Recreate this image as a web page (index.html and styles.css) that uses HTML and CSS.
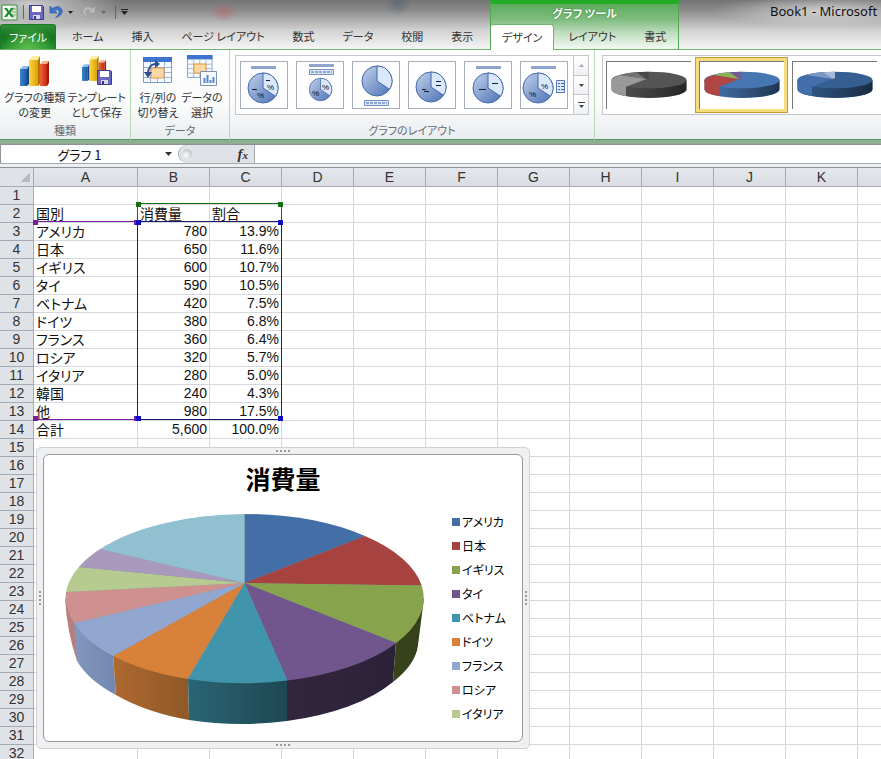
FILE: index.html
```html
<!DOCTYPE html>
<html lang="ja">
<head>
<meta charset="utf-8">
<title>Book1 - Microsoft</title>
<link rel="stylesheet" href="styles.css">
</head>
<body>
<svg class="defs" aria-hidden="true">
  <defs>
    <linearGradient id="disc" x1="0" y1="0" x2="1" y2="1"><stop offset="0" stop-color="#c3d2ec"/><stop offset="1" stop-color="#4a70b4"/></linearGradient>
    <linearGradient id="bar-blue"><stop offset="0" stop-color="#3f86cf"/><stop offset="1" stop-color="#1d569f"/></linearGradient>
    <linearGradient id="bar-gold"><stop offset="0" stop-color="#fbd545"/><stop offset="1" stop-color="#dfa100"/></linearGradient>
    <linearGradient id="bar-red"><stop offset="0" stop-color="#f0653c"/><stop offset="1" stop-color="#c5280e"/></linearGradient>
    <linearGradient id="shade"><stop offset="0" stop-color="#000" stop-opacity=".1"/><stop offset="1" stop-color="#000" stop-opacity=".55"/></linearGradient>
    <g id="pie">
      <circle r="15" fill="url(#disc)" stroke="#4468a8"/>
      <path d="M0 0V-15A15 15 0 0 1 12.500 8.300Z" fill="#dbe7fa" stroke="#4468a8"/>
    </g>
    <g id="bars">
      <path d="M0 13l3-3h6l-2 3z" fill="#8fbdec"/><path d="M0 13h7v17H0z" fill="url(#bar-blue)"/><path d="M7 13l2-3v18l-2 2z" fill="#174782"/>
      <path d="M20 8l3-3h6l-2 3z" fill="#f8a888"/><path d="M20 8h7v22h-7z" fill="url(#bar-red)"/><path d="M27 8l2-3v22l-2 3z" fill="#9c1c08"/>
      <path d="M9 4l3-4h8l-2 4z" fill="#fff0a0"/><path d="M9 4h9v26H9z" fill="url(#bar-gold)"/><path d="M18 4l2-4v28l-2 2z" fill="#b07a00"/>
    </g>
    <g id="grid">
      <path d="M.5.5h28v25H.5z" fill="#f6faff" stroke="#7b9ccc"/>
      <path d="M0 0h29v5H0z" fill="#3d74d0"/>
      <path d="M1 10.500h27M1 15.500h27M1 20.500h27M7.500 5v20M14.500 5v20M21.500 5v20" stroke="#9eb5d8"/>
    </g>
    <g id="floppy">
      <path d="M.5.5h13l1 1v13H.5z" fill="#6b67c0" stroke="#3f3a8c"/>
      <path d="M3 1h9v6H3z" fill="#fff"/><path d="M4 10h7v4H4z" fill="#d6d9ee"/><path d="M5 11h2v3H5z" fill="#37347c"/>
    </g>
  </defs>
</svg>

<header class="top">
  <div class="quick">
    <svg class="xl" viewBox="0 0 17 17" aria-hidden="true"><path d="M1 1h15v15H1z" fill="#f4faf2" stroke="#3c8a3e"/><path d="M10 2h5v13h-5z" fill="#d5e8d2"/><path d="M11 5h4M11 8h4M11 11h4" stroke="#7db57c"/><path d="M3 4h3l2 3 2-3h3L9.500 8.500 13 13h-3l-2-3-2 3H3l3.500-4.500z" fill="#1f8a35"/></svg>
    <span class="bar"></span>
    <button aria-label="上書き保存"><svg width="15" height="15"><use href="#floppy"/></svg></button>
    <button aria-label="元に戻す"><svg width="14" height="14" viewBox="0 0 14 14"><path d="M1 1v7h7L5.500 5.700C8.500 3.500 11 5 10 8c-.5 1.800-1.800 3-3.500 4.500C11 11.500 14 8.500 13 5 12 1.500 7.500.5 3.500 3.500z" fill="#3f74c8" stroke="#2454a0" stroke-width=".6"/></svg></button>
    <button aria-label="元に戻す一覧" class="drop"><svg width="5" height="3"><path d="M0 0h5L2.500 3z" fill="#222"/></svg></button>
    <button aria-label="やり直し"><svg width="14" height="14" viewBox="0 0 14 14"><path d="M13 1v7H6l2.500-2.300C5.500 3.500 3 5 4 8c.5 1.800 1.800 3 3.500 4.500C3 11.500 0 8.500 1 5 2 1.500 6.500.5 10.500 3.500z" fill="#b9b9b9" stroke="#9a9a9a" stroke-width=".6"/></svg></button>
    <button aria-label="やり直し一覧" class="drop"><svg width="5" height="3"><path d="M0 0h5L2.500 3z" fill="#666"/></svg></button>
    <span class="bar"></span>
    <button aria-label="ツールバーのカスタマイズ"><svg width="7" height="6"><path d="M0 0h7v1H0zM0 2h7L3.500 6z" fill="#222"/></svg></button>
  </div>
  <nav class="tabs">
    <a class="file" href="#file">ファイル</a>
    <a href="#home">ホーム</a>
    <a href="#insert">挿入</a>
    <a href="#page">ページ レイアウト</a>
    <a href="#formulas">数式</a>
    <a href="#data">データ</a>
    <a href="#review">校閲</a>
    <a href="#view">表示</a>
  </nav>
  <div class="context">
    <div class="context-title">グラフ ツール</div>
    <nav class="tabs">
      <a class="active" href="#design">デザイン</a>
      <a href="#layout">レイアウト</a>
      <a href="#format">書式</a>
    </nav>
  </div>
  <div class="caption">Book1 - Microsoft</div>
</header>

<section class="ribbon">
  <div class="group type-group">
    <div class="tools">
      <button class="tool"><svg width="32" height="32"><use href="#bars" x="1" y="1"/></svg>グラフの種類<br>の変更</button>
      <button class="tool"><svg width="32" height="32"><use href="#bars" transform="translate(1 1) scale(.83)"/><use href="#floppy" x="16" y="15"/></svg>テンプレート<br>として保存</button>
    </div>
    <h2>種類</h2>
  </div>
  <div class="group data-group">
    <div class="tools">
      <button class="tool"><svg width="32" height="32"><use href="#grid" x="1" y="2"/><path d="M9 13h13v10H9z" fill="#fbd9a6" stroke="#e8973a"/><path d="M6 19C6 13 9 9 14 9" fill="none" stroke="#2b4f8f" stroke-width="2"/><path d="M13 5l5 4-5 4zM2 17h8l-4 6z" fill="#2b4f8f"/></svg>行/列の<br>切り替え</button>
      <button class="tool"><svg width="32" height="32"><use href="#grid" transform="translate(1 0) scale(.88)"/><path d="M8 9h12v9H8z" fill="#fbd9a6" stroke="#e8973a"/><path d="M14.500 16.500h16v14h-16z" fill="#f5f8fc" stroke="#7d90ad"/><path d="M18.500 23v5M21.500 20v8M24.500 25v3M27.500 22v6" stroke="#5c86c8" stroke-width="2"/></svg>データの<br>選択</button>
    </div>
    <h2>データ</h2>
  </div>
  <div class="group">
    <div class="gallery layouts">
      <button aria-label="レイアウト 1"><svg viewBox="0 0 46 46"><path d="M10 4h25v3H10z" fill="#8fa5d0"/><use href="#pie" x="22" y="26"/><path d="M11 27.500h5M25 18.500h4" stroke="#123"/><text x="26" y="28">%</text><text x="16" y="36">%</text></svg></button>
      <button aria-label="レイアウト 2"><svg viewBox="0 0 46 46"><path d="M12 2h25v3H12z" fill="#8fa5d0"/><path d="M12.500 7.500h24v5h-24z" fill="#dfe8f7" stroke="#7590c4"/><path d="M14 10h21" stroke="#3f65ae" stroke-dasharray="3 1"/><use href="#pie" transform="translate(23.500 27.500) scale(.75)"/><text x="25" y="28">%</text><text x="15" y="34">%</text></svg></button>
      <button aria-label="レイアウト 3"><svg viewBox="0 0 46 46"><use href="#pie" x="24" y="19"/><path d="M11.500 38.500h24v5h-24z" fill="#dfe8f7" stroke="#7590c4"/><path d="M13 41h21" stroke="#3f65ae" stroke-dasharray="3 1"/></svg></button>
      <button aria-label="レイアウト 4"><svg viewBox="0 0 46 46"><use href="#pie" x="22" y="25"/><path d="M13 27.500h4M15 29.500h5M27 19.500h5M27 23.500h5" stroke="#123"/></svg></button>
      <button aria-label="レイアウト 5"><svg viewBox="0 0 46 46"><path d="M11 4h25v3H11z" fill="#8fa5d0"/><use href="#pie" x="23" y="26"/><path d="M14 27.500h7M27 21.500h6" stroke="#123"/></svg></button>
      <button aria-label="レイアウト 6"><svg viewBox="0 0 46 46"><path d="M10 4h25v3H10z" fill="#8fa5d0"/><use href="#pie" x="17" y="26"/><text x="20" y="27">%</text><text x="8" y="35">%</text><path d="M35.500 18.500h8v12h-8z" fill="#dfe8f7" stroke="#5577b5"/><path d="M37 21.500h2M40 21.500h3M37 24.500h2M40 24.500h3M37 27.500h2M40 27.500h3" stroke="#3f65ae"/></svg></button>
      <div class="scroller">
        <button aria-label="上へ"><svg width="5" height="3"><path d="M0 3h5L2.500 0z" fill="#aaa"/></svg></button>
        <button aria-label="下へ"><svg width="5" height="3"><path d="M0 0h5L2.500 3z" fill="#444"/></svg></button>
        <button aria-label="その他"><svg width="7" height="6"><path d="M0 0h7v1H0zM1 3h5L3.500 6z" fill="#444"/></svg></button>
      </div>
    </div>
    <h2>グラフのレイアウト</h2>
  </div>
  <div class="group styles-group">
    <div class="gallery styles">
      <button aria-label="スタイル 1" class="mono"><svg viewBox="0 0 85 48"><path class="a" d="M5.500 18v9.500a37.500 8.500 0 0 0 75 0V18z"/><path class="b" d="M5.500 18v9.500Q6.500 32 20 34V18z"/><path d="M20 25v9a37.500 8.500 0 0 0 60.500-6.500V18z" fill="url(#shade)"/><ellipse class="a" cx="43" cy="18" rx="37.500" ry="8.300"/><path class="b" d="M40.500 17L20 24.700Q-7 20 14.700 13z"/><path class="c" d="M40.500 17L14.700 13Q21 11 30.700 10.300z"/><path class="d" d="M40.500 17L30.700 10.300Q36 9.700 43 9.700V16z"/></svg></button>
      <button aria-label="スタイル 2" class="color selected"><svg viewBox="0 0 85 48"><path class="a" d="M5.500 18v9.500a37.500 8.500 0 0 0 75 0V18z"/><path class="b" d="M5.500 18v9.500Q6.500 32 20 34V18z"/><path d="M20 25v9a37.500 8.500 0 0 0 60.500-6.500V18z" fill="url(#shade)"/><ellipse class="a" cx="43" cy="18" rx="37.500" ry="8.300"/><path class="b" d="M40.500 17L20 24.700Q-7 20 14.700 13z"/><path class="c" d="M40.500 17L14.700 13Q21 11 30.700 10.300z"/><path class="d" d="M40.500 17L30.700 10.300Q36 9.700 43 9.700V16z"/></svg></button>
      <button aria-label="スタイル 3" class="blue"><svg viewBox="0 0 85 48"><path class="a" d="M5.500 18v9.500a37.500 8.500 0 0 0 75 0V18z"/><path class="b" d="M5.500 18v9.500Q6.500 32 20 34V18z"/><path d="M20 25v9a37.500 8.500 0 0 0 60.500-6.500V18z" fill="url(#shade)"/><ellipse class="a" cx="43" cy="18" rx="37.500" ry="8.300"/><path class="b" d="M40.500 17L20 24.700Q-7 20 14.700 13z"/><path class="c" d="M40.500 17L14.700 13Q21 11 30.700 10.300z"/><path class="d" d="M40.500 17L30.700 10.300Q36 9.700 43 9.700V16z"/></svg></button>
    </div>
  </div>
</section>

<div class="formula">
  <input class="name" aria-label="名前ボックス" value="グラフ 1">
  <button class="name-drop" aria-label="名前の一覧"><svg width="7" height="4"><path d="M0 0h7L3.500 4z" fill="#333"/></svg></button>
  <div class="fx"><span class="knob"></span><button aria-label="関数の挿入"><i>f<small>x</small></i></button></div>
  <input class="entry" aria-label="数式バー">
</div>

<main class="sheet">
  <table id="cells"></table>
  <div class="range names"><i></i><i></i><i></i><i></i></div>
  <div class="range values"><i></i><i></i><i></i><i></i></div>
  <div class="range heads"><i></i><i></i><i></i><i></i></div>
  <figure class="chart">
    <i class="grip n"></i><i class="grip s"></i><i class="grip w"></i><i class="grip e"></i>
    <div class="plot">
      <figcaption>消費量</figcaption>
      <div class="plot-body">
        <svg viewBox="65 510 360 216" role="img" aria-label="消費量">
          <defs>
            <linearGradient id="s-green"><stop offset="0" stop-color="#38431e"/><stop offset="1" stop-color="#33411a"/></linearGradient>
            <linearGradient id="s-purple"><stop offset="0" stop-color="#32263e"/><stop offset="1" stop-color="#2b2138"/></linearGradient>
            <linearGradient id="s-teal"><stop offset="0" stop-color="#296575"/><stop offset="1" stop-color="#1f4753"/></linearGradient>
            <linearGradient id="s-orange"><stop offset="0" stop-color="#ae6931"/><stop offset="1" stop-color="#8f5827"/></linearGradient>
            <linearGradient id="s-blue"><stop offset="0" stop-color="#8398bf"/><stop offset="1" stop-color="#7287ac"/></linearGradient>
          </defs>
          <path fill="#b97d7c" d="M65 598Q67 632 77 661L80 620z"/>
          <path fill="url(#s-blue)" d="M74 622L77 661A174 84 0 0 0 116 695L113 655z"/>
          <path fill="url(#s-orange)" d="M113 655L116 695A174 84 0 0 0 189 720L188 678z"/>
          <path fill="url(#s-teal)" d="M188 678L189 720A174 84 0 0 0 287 721V680z"/>
          <path fill="url(#s-purple)" d="M287 680V721A174 84 0 0 0 393 682L396 642z"/>
          <path fill="url(#s-green)" d="M396 642L393 682Q416 664 418 645L424 598z"/>
          <ellipse fill="#8296a8" cx="244.500" cy="598.500" rx="178.500" ry="83.500"/>
          <path fill="#446fa6" d="M244.500 583V514A179.500 84.500 0 0 1 365 536z"/>
          <path fill="#a64340" d="M244.500 583L365 536A179.500 84.500 0 0 1 421.700 585.500z"/>
          <path fill="#87a34b" d="M244.500 583L421.700 585.500A179.500 84.500 0 0 1 396.300 643z"/>
          <path fill="#70568c" d="M244.500 583L396.300 643A179.500 84.500 0 0 1 287.300 680.500z"/>
          <path fill="#4095ac" d="M244.500 583L287.300 680.500A179.500 84.500 0 0 1 187.700 679z"/>
          <path fill="#d7813b" d="M244.500 583L187.700 679A179.500 84.500 0 0 1 113 656z"/>
          <path fill="#92a7d0" d="M244.500 583L113 656A179.500 84.500 0 0 1 74.300 623z"/>
          <path fill="#cf918f" d="M244.500 583L74.300 623A179.500 84.500 0 0 1 66 592z"/>
          <path fill="#b7cb91" d="M244.500 583L66 592A179.500 84.500 0 0 1 79 567z"/>
          <path fill="#a899bd" d="M244.500 583L79 567A179.500 84.500 0 0 1 100.300 549z"/>
          <path fill="#91c1d1" d="M244.500 583L100.300 549A179.500 84.500 0 0 1 244.500 514z"/>
        </svg>
        <ul class="legend">
          <li class="c1">アメリカ</li>
          <li class="c2">日本</li>
          <li class="c3">イギリス</li>
          <li class="c4">タイ</li>
          <li class="c5">ベトナム</li>
          <li class="c6">ドイツ</li>
          <li class="c7">フランス</li>
          <li class="c8">ロシア</li>
          <li class="c9">イタリア</li>
        </ul>
      </div>
    </div>
  </figure>
</main>
<script src="script.js"></script>
</body>
</html>
```
FILE: styles.css
```css
* { box-sizing: border-box; }

body {
  margin: 0;
  height: 100vh;
  overflow: hidden;
  display: flex;
  flex-direction: column;
  font-family: "Noto Sans CJK JP", sans-serif;
  font-feature-settings: "palt";
  font-size: 12px;
  color: #333;
  background: #fff;
}

button, input {
  font: inherit;
  font-feature-settings: inherit;
  color: inherit;
  border: 0;
  padding: 0;
  margin: 0;
  background: none;
}

svg { display: block; flex: none; }
.defs { position: absolute; width: 0; height: 0; }

/* Title bar and tabs */
.top {
  flex: none;
  display: grid;
  grid-template-columns: 490px 189px 1fr;
  grid-template-rows: 24px 25px;
  border-bottom: 1px solid #6db56d;
  background:
    radial-gradient(ellipse 90px 22px at 30px 4px, rgba(235, 235, 235, .7), transparent),
    radial-gradient(ellipse 14px 10px at 224px 12px, rgba(190, 90, 90, .5), transparent),
    radial-gradient(ellipse 14px 12px at 398px 4px, rgba(60, 85, 105, .4), transparent),
    radial-gradient(ellipse 110px 16px at 825px 11px, rgba(235, 235, 235, .7), transparent),
    linear-gradient(#747476, #8a8a8b 20%, #a9a9aa 38%, #d2d2d2 62%, #f6f6f6);
}

.quick { display: flex; align-items: center; padding-left: 1px; gap: 5px; }
.quick .xl { width: 17px; height: 17px; }
.quick .bar { width: 1px; height: 14px; background: #666; }
.quick .drop { margin-right: 4px; }

.tabs { display: flex; grid-row: 2; grid-column: 1; font-size: 11px; }
.tabs a {
  flex: none;
  padding: 0 14px;
  line-height: 25px;
  color: #333;
  text-decoration: none;
  white-space: nowrap;
}
.tabs .file {
  width: 56px;
  padding: 0;
  margin-right: 2px;
  text-align: center;
  color: #fff;
  border: 1px solid #1d7a28;
  border-bottom: 0;
  border-radius: 3px 3px 0 0;
  background: radial-gradient(ellipse at 50% 100%, #5dc04d, transparent 70%), linear-gradient(#2f9137, #167322 50%, #239230);
}

.context {
  grid-column: 2;
  grid-row: 1 / 3;
  border-top: 4px solid #22ab25;
  border-left: 1px solid #4fa850;
  border-right: 1px solid #4fa850;
  background: linear-gradient(#5cac5d, #80bd80 35%, #c0dec0 65%, #f3f9f3);
  display: flex;
  flex-direction: column;
}
.context-title {
  flex: none;
  height: 20px;
  line-height: 19px;
  text-align: center;
  color: #fff;
  font-size: 11px;
  font-weight: 700;
  text-shadow: 0 0 2px #2a702b;
}
.context .active {
  padding: 0 11px;
  height: 26px;
  border: 1px solid #6db56d;
  border-width: 1px 1px 0 0;
  border-radius: 3px 3px 0 0;
  background: #fff;
}
.caption {
  grid-column: 3;
  padding-left: 91px;
  line-height: 23px;
  font-family: "Noto Sans", sans-serif;
  font-size: 13px;
  color: #111;
  white-space: nowrap;
}

/* Ribbon */
.ribbon {
  flex: none;
  display: flex;
  height: 94px;
  border-bottom: 4px solid #8fae92;
  box-shadow: inset 0 -1px #4f9a57;
  background: linear-gradient(#fff, #fafbfb 60%, #e9ecef);
  overflow: hidden;
}
.group {
  flex: none;
  display: flex;
  flex-direction: column;
  justify-content: space-between;
  padding: 5px 5px 0;
  border-right: 1px solid #b5d9b5;
}
.group h2 {
  margin: 0;
  font-size: 11px;
  line-height: 19px;
  font-weight: 400;
  text-align: center;
  color: #666b73;
}
.type-group { width: 131px; padding: 5px 3px 0; }
.data-group { width: 99px; }
.styles-group { flex: 1; min-width: 0; padding: 5px 0 0 7px; border: 0; }
.tools { display: flex; justify-content: space-around; }
.tool {
  display: flex;
  flex-direction: column;
  align-items: center;
  font-size: 11px;
  line-height: 15px;
  white-space: nowrap;
}
.tool svg { margin-bottom: 3px; }

.gallery { display: flex; border: 1px solid #c4c6c9; height: 60px; background: #fff; }
.layouts { padding: 5px 0 5px 4px; gap: 8px; }
.layouts > button { width: 48px; height: 48px; border: 1px solid #a6adbb; }
.layouts text { font: 8px "Liberation Sans", sans-serif; fill: #012; }
.scroller {
  display: flex;
  flex-direction: column;
  width: 15px;
  margin: -5px 0 -5px -3px;
  border-left: 1px solid #c4c6c9;
}
.scroller button { flex: 1; display: flex; align-items: center; justify-content: center; background: linear-gradient(#fff, #eef0f2); }
.scroller button + button { border-top: 1px solid #c4c6c9; }

.styles { padding: 5px 0 5px 3px; gap: 8px; border-right: 0; }
.styles > button { flex: none; width: 85px; height: 48px; border: 1px solid #777; border-width: 1px 0 0 1px; }
.styles svg { width: 85px; height: 48px; margin: -1px; }
.styles .selected { background: #fff; outline: 3px solid #f6dc7c; box-shadow: 0 0 0 4px #c39a34; }
.mono .a { fill: #555; } .mono .b { fill: #999; } .mono .c { fill: #737373; } .mono .d { fill: #484848; }
.color .a { fill: #4677b3; } .color .b { fill: #b04643; } .color .c { fill: #91ae52; } .color .d { fill: #745a94; }
.blue .a { fill: #355e91; } .blue .b { fill: #426fa9; } .blue .c { fill: #7b98c4; } .blue .d { fill: #a7b9d8; }

/* Formula bar */
.formula {
  flex: none;
  display: flex;
  height: 24px;
  border-top: 1px solid #8c9198;
  border-bottom: 1px solid #8c9198;
  box-shadow: inset 0 -3px #eceef0, inset 0 -4px #a4a9b0;
  padding-bottom: 4px;
  color: #111;
}
.name { width: 158px; text-align: center; font-size: 13px; border-left: 1px solid #8c9198; }
.name-drop { width: 20px; display: flex; align-items: center; justify-content: center; }
.fx {
  width: 77px;
  display: flex;
  align-items: center;
  justify-content: space-between;
  padding: 0 6px 0 3px;
  border: 1px solid #a4a9b0;
  border-width: 0 1px;
  border-radius: 10px 0 0 10px;
  background: #dfe3e8;
}
.knob { width: 10px; height: 10px; border-radius: 50%; background: radial-gradient(circle at 40% 65%, #fff, #aab0b8); }
.fx i { font: italic 700 15px "Liberation Serif", serif; color: #333; }
.fx small { font-size: 11px; }
.entry { flex: 1; min-width: 0; }

/* Sheet */
.sheet { flex: 1; min-height: 0; position: relative; overflow: hidden; }
table {
  table-layout: fixed;
  width: 930px;
  border-collapse: separate;
  border-spacing: 0;
  font-size: 14px;
  line-height: 17px;
  color: #111;
}
th, td {
  padding: 0 2px;
  height: 18px;
  border: 1px solid #d6d8dc;
  border-width: 0 1px 1px 0;
  white-space: nowrap;
}
th, .num { font-family: "Liberation Sans", sans-serif; }
th { padding: 0; font-weight: 400; color: #333; background: #dfe2e7; border-color: #a6abb3; }
thead th { height: 19px; padding-top: 1px; background: linear-gradient(#e4e7eb, #d9dde3); }
.corner { background: linear-gradient(135deg, transparent 50%, #b6bbc3 50%) 20px 5px / 10px 9px no-repeat #dfe2e7; }
.num { text-align: right; }
.w-head { width: 34px; }
.w-first { width: 104px; }
.w-cell { width: 72px; }

/* Highlighted source ranges */
.range { position: absolute; color: #1a1a6e; border: 1px solid currentColor; }
.range i { position: absolute; width: 5px; height: 5px; background: #0b0bc8; }
.range i:nth-child(1) { left: -2px; top: -2px; }
.range i:nth-child(2) { right: -2px; top: -2px; }
.range i:nth-child(3) { left: -2px; bottom: -2px; }
.range i:nth-child(4) { right: -2px; bottom: -2px; }
.values { left: 137px; top: 53px; width: 145px; height: 199px; }
.heads { left: 137px; top: 35px; width: 145px; height: 18px; color: #147014; border-bottom: 0; }
.heads i { background: #147014; }
.heads i:nth-child(n + 3) { display: none; }
.names { left: 35px; top: 53px; width: 102px; height: 199px; color: #7d1c9b; border-width: 1px 0; }
.names i { background: #7d1c9b; }

/* Chart object */
.chart {
  position: absolute;
  left: 36px;
  top: 279px;
  margin: 0;
  padding: 6px;
  border: 1px solid #d0d2d4;
  border-radius: 5px;
  background: #eff0f1;
}
.plot {
  width: 480px;
  height: 288px;
  border: 1px solid #999;
  border-radius: 6px;
  background: #fff;
}
figcaption { height: 55px; line-height: 46px; text-align: center; font-size: 25px; font-weight: 700; color: #000; }
.plot-body { display: flex; padding-left: 21px; gap: 27px; }
.plot-body > svg { width: 360px; height: 216px; }
.legend { margin: 0; padding: 0; list-style: none; font-size: 12px; line-height: 24px; color: #000; white-space: nowrap; }
.legend li { display: flex; align-items: center; gap: 2px; }
.legend li::before { content: ""; width: 8px; height: 8px; background: var(--c); }
.c1 { --c: #446fa6; } .c2 { --c: #a64340; } .c3 { --c: #87a34b; }
.c4 { --c: #70568c; } .c5 { --c: #4095ac; } .c6 { --c: #d7813b; }
.c7 { --c: #92a7d0; } .c8 { --c: #cf918f; } .c9 { --c: #b7cb91; }
.grip { position: absolute; background: radial-gradient(circle, #999 1px, transparent 1px) 0 0 / 4px 4px; }
.grip.n, .grip.s { left: 50%; width: 16px; height: 4px; margin-left: -8px; }
.grip.w, .grip.e { top: 50%; width: 4px; height: 16px; margin-top: -8px; }
.grip.n { top: 1px; } .grip.s { bottom: 1px; } .grip.w { left: 1px; } .grip.e { right: 1px; }
```
FILE: script.js
```js
const columns = [..."ABCDEFGHIJK", ""];
const rowCount = 32;
const data = {
  2: ["国別", "消費量", "割合"],
  3: ["アメリカ", "780", "13.9%"],
  4: ["日本", "650", "11.6%"],
  5: ["イギリス", "600", "10.7%"],
  6: ["タイ", "590", "10.5%"],
  7: ["ベトナム", "420", "7.5%"],
  8: ["ドイツ", "380", "6.8%"],
  9: ["フランス", "360", "6.4%"],
  10: ["ロシア", "320", "5.7%"],
  11: ["イタリア", "280", "5.0%"],
  12: ["韓国", "240", "4.3%"],
  13: ["他", "980", "17.5%"],
  14: ["合計", "5,600", "100.0%"]
};

const widths = ["w-head", "w-first"].concat(Array(columns.length - 1).fill("w-cell"));
let html = "<colgroup>" + widths.map(w => `<col class="${w}">`).join("") + "</colgroup>";
html += '<thead><tr><th class="corner"></th>' + columns.map(c => `<th scope="col">${c}</th>`).join("") + "</tr></thead><tbody>";
for (let r = 1; r <= rowCount; r++) {
  const values = data[r] || [];
  html += `<tr><th scope="row">${r}</th>` + columns.map((_, i) => {
    const value = values[i] || "";
    return `<td${/^\d/.test(value) ? ' class="num"' : ""}>${value}</td>`;
  }).join("") + "</tr>";
}
document.getElementById("cells").innerHTML = html + "</tbody>";
```
